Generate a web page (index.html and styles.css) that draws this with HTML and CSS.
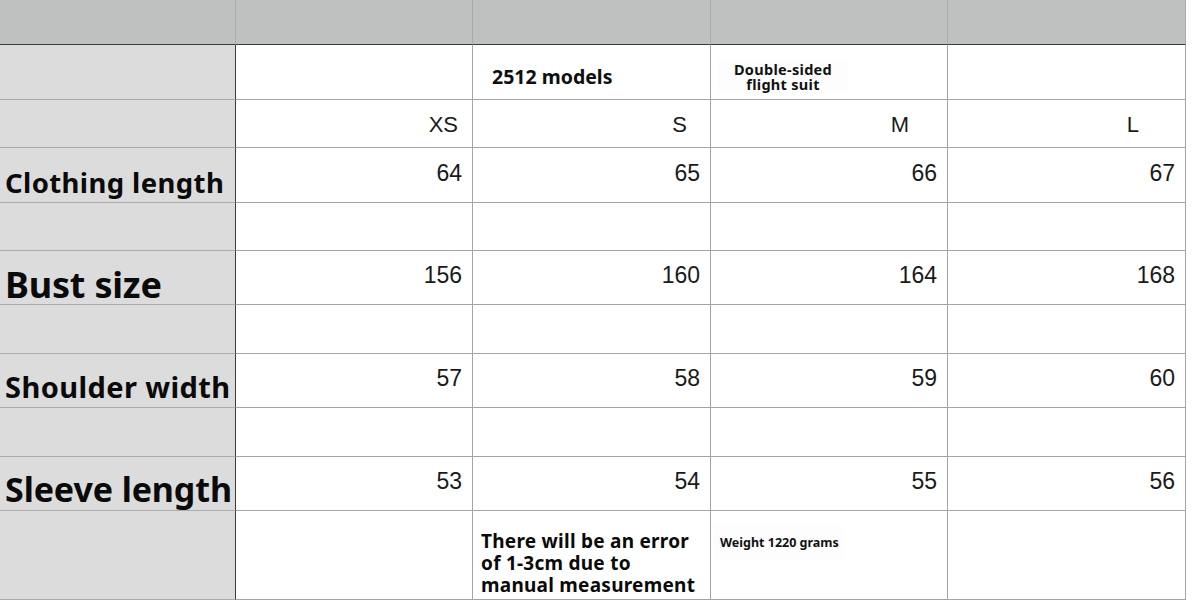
FILE: index.html
```html
<!DOCTYPE html>
<html>
<head>
<meta charset="utf-8">
<link rel="stylesheet" href="styles.css">
</head>
<body>
<div class="sheet">
  <div class="c hd"></div><div class="c hd"></div><div class="c hd"></div><div class="c hd"></div><div class="c hd"></div>

  <div class="c lab"></div>
  <div class="c"></div>
  <div class="c model"><span>2512 models</span></div>
  <div class="c suit"><span class="suit-box">Double-sided<br>flight suit</span></div>
  <div class="c"></div>

  <div class="c lab"></div>
  <div class="c size s-xs">XS</div>
  <div class="c size s-s">S</div>
  <div class="c size s-m">M</div>
  <div class="c size s-l">L</div>

  <div class="c lab l-cloth">Clothing length</div>
  <div class="c num">64</div><div class="c num">65</div><div class="c num">66</div><div class="c num">67</div>

  <div class="c lab"></div><div class="c"></div><div class="c"></div><div class="c"></div><div class="c"></div>

  <div class="c lab l-bust">Bust size</div>
  <div class="c num">156</div><div class="c num">160</div><div class="c num">164</div><div class="c num">168</div>

  <div class="c lab"></div><div class="c"></div><div class="c"></div><div class="c"></div><div class="c"></div>

  <div class="c lab l-shoulder">Shoulder width</div>
  <div class="c num">57</div><div class="c num">58</div><div class="c num">59</div><div class="c num">60</div>

  <div class="c lab"></div><div class="c"></div><div class="c"></div><div class="c"></div><div class="c"></div>

  <div class="c lab l-sleeve">Sleeve length</div>
  <div class="c num">53</div><div class="c num">54</div><div class="c num">55</div><div class="c num">56</div>

  <div class="c lab"></div>
  <div class="c"></div>
  <div class="c note">There will be an error<br>of 1-3cm due to<br>manual measurement</div>
  <div class="c weight"><span class="weight-box">Weight 1220 grams</span></div>
  <div class="c"></div>
</div>
</body>
</html>
```

FILE: styles.css
```css
html, body {
  margin: 0;
  padding: 0;
  background: #ffffff;
}

.sheet {
  display: grid;
  grid-template-columns: 236px 237px 238px 237px 238px;
  grid-template-rows: 45px 55px 48px 55px 48px 54px 49px 54px 49px 54px 89px;
  width: 1186px;
  font-family: "Liberation Sans", Arial, sans-serif;
  color: #111;
}

.c {
  box-sizing: border-box;
  border-right: 1px solid #a4a4a4;
  border-bottom: 1px solid #a4a4a4;
  background: #ffffff;
  display: flex;
  overflow: hidden;
}

.hd {
  background: #bfc1c0;
  border-bottom-color: #3a3a3a;
  border-right-color: #a9aaaa;
}

.lab {
  background: #dcdcdc;
  border-right-color: #3a3a3a;
  border-bottom-color: #ababab;
  font-family: "Noto Sans", "Open Sans", sans-serif;
  font-weight: 700;
  color: #0a0a0a;
  align-items: flex-end;
  padding-left: 5px;
  white-space: nowrap;
  overflow: visible;
}

.l-cloth { font-size: 27.5px; line-height: 1; padding-bottom: 6px; letter-spacing: 0.4px; }
.l-bust { font-size: 36px; line-height: 1; padding-bottom: 1px; letter-spacing: -0.2px; }
.l-shoulder { font-size: 29px; line-height: 1; padding-bottom: 6px; letter-spacing: 0.4px; }
.l-sleeve { font-size: 34px; line-height: 1; padding-bottom: 4px; letter-spacing: -0.1px; }

.num {
  justify-content: flex-end;
  align-items: center;
  padding-right: 10px;
  padding-bottom: 4px;
  font-size: 23px;
  color: #1a1a1a;
}

.size {
  justify-content: flex-end;
  align-items: center;
  font-size: 22px;
  color: #1a1a1a;
  padding-top: 2px;
}
.s-xs { padding-right: 14px; }
.s-s { padding-right: 23px; }
.s-m { padding-right: 38px; }
.s-l { padding-right: 46px; }

.model {
  font-family: "Noto Sans", "Open Sans", sans-serif;
  font-weight: 700;
  font-size: 19.5px;
  align-items: center;
  padding-left: 19px;
  padding-top: 8px;
  color: #0e0e0e;
}

.suit {
  align-items: flex-start;
  padding: 14px 0 0 7px;
}
.suit-box {
  background: #fdfdfd;
  width: 130px;
  height: 34px;
  text-align: center;
  font-family: "Noto Sans", "Open Sans", sans-serif;
  font-weight: 700;
  font-size: 14.5px;
  line-height: 15px;
  letter-spacing: 0.3px;
  color: #111;
  padding-top: 3px;
  box-sizing: border-box;
}

.note {
  font-family: "Noto Sans", "Open Sans", sans-serif;
  font-weight: 700;
  font-size: 19px;
  line-height: 22px;
  letter-spacing: 0.25px;
  color: #0a0a0a;
  padding: 19px 0 0 8px;
  white-space: nowrap;
}

.weight {
  align-items: flex-start;
  padding: 14px 0 0 3px;
}
.weight-box {
  background: #fdfdfd;
  width: 130px;
  height: 34px;
  font-family: "Noto Sans", "Open Sans", sans-serif;
  font-weight: 700;
  font-size: 12.5px;
  line-height: 35px;
  padding-left: 6px;
  color: #111;
  box-sizing: border-box;
}
```
